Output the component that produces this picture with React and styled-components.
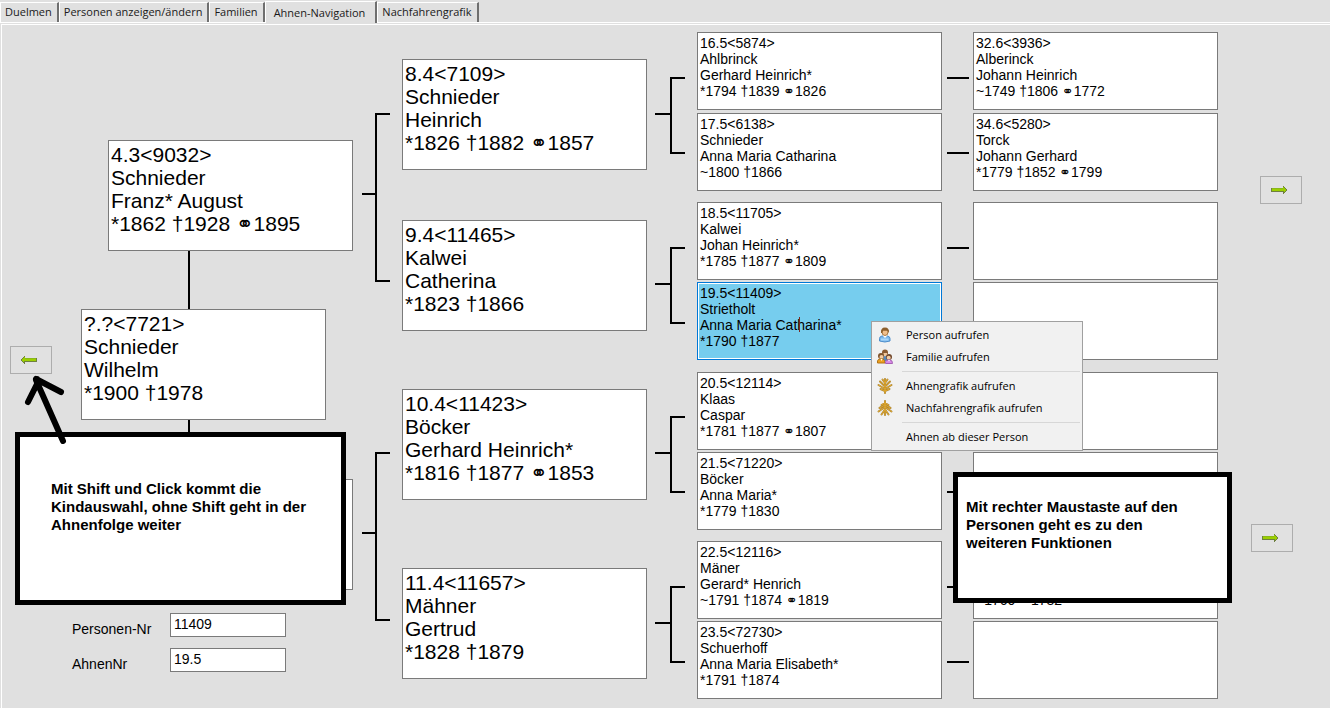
import React from "react";
import styled, { createGlobalStyle, css } from "styled-components";

const GlobalStyle = createGlobalStyle`
  *, *::before, *::after { box-sizing: border-box; }
  body {
    margin: 0;
    background: #e0e0e0;
    color: #000;
    font-family: "Liberation Sans", "DejaVu Sans", sans-serif;
    font-size: 14px;
  }
`;

const Page = styled.div`
  min-height: 100vh;
  display: flex;
  flex-direction: column;
`;

const TabBar = styled.nav`
  display: flex;
  align-items: flex-end;
  height: 23px;
  padding-top: 1px;
  border-bottom: 1px solid #fff;
`;

const Tab = styled.button`
  height: ${(p) => (p.$active ? "22px" : "20px")};
  margin: 0 0 ${(p) => (p.$active ? "-1px" : "0")};
  padding: ${(p) => (p.$active ? "0 10px 0 8px" : "0 5px 2px 4px")};
  border: 0;
  border-top: 1px solid #fff;
  border-left: 1px solid #fff;
  border-right: 2px solid #6f6f6f;
  background: #e0e0e0;
  color: #1a1a1a;
  font: 11px/17px "Open Sans", "Noto Sans", sans-serif;
  white-space: nowrap;
`;

const Panel = styled.main`
  flex: 1;
  display: flex;
  align-items: flex-start;
  margin: 1px 0 0 1px;
  border-top: 1px solid #fff;
  border-left: 1px solid #fff;
`;

const LeftPane = styled.section`
  position: relative;
  flex: 1 0 351px;
  display: flex;
`;

/* A vertical strip of the tree; $rows alternates gaps and items. */
const Column = styled.div`
  display: grid;
  grid-template-rows: ${(p) => p.$rows};
  align-content: start;
  flex: ${(p) => (p.$grow ? "1 0" : "0 0")} ${(p) => p.$width};
  padding-left: ${(p) => p.$inset || "0"};
  position: relative;
`;

const Slot = styled.div`
  grid-row: ${(p) => p.$row};
  display: flex;
  position: relative;
  padding-left: ${(p) => p.$indent || "0"};
  padding-right: ${(p) => p.$outdent || "0"};
`;

const nodeSizes = {
  large: css`
    height: 111px;
    padding: 2px 0 0 2px;
    font-size: 21px;
    line-height: 23px;
  `,
  small: css`
    height: 78px;
    padding: 2px 0 0 2px;
    font-size: 14px;
    line-height: 16px;
  `,
};

const NodeBox = styled.textarea`
  display: block;
  flex: 1 1 245px;
  width: 245px;
  min-width: 0;
  margin: 0;
  border: 1px solid #7a7a7a;
  border-radius: 0;
  background: #fff;
  color: #000;
  font-family: "Liberation Sans", "DejaVu Sans", sans-serif;
  resize: none;
  overflow: hidden;
  outline: 0;
  white-space: pre;
  ${(p) => nodeSizes[p.$size]}
  ${(p) =>
    p.$selected &&
    css`
      border-color: #0078d7;
      background: #76cdee;
      box-shadow: inset 0 0 0 1px #fff;
    `}
`;

const Caret = styled.span`
  position: absolute;
  left: 102px;
  top: 35px;
  width: 1px;
  height: 15px;
  background: #7a2a20;
`;

const VerticalLink = styled.div`
  width: 2px;
  margin-left: 116px;
  background: #000;
`;

const Bracket = styled.div`
  display: flex;
  align-items: flex-start;
`;

const Stem = styled.span`
  flex: none;
  width: ${(p) => p.$width};
  height: 2px;
  margin-top: ${(p) => p.$top};
  background: #000;
`;

const Fork = styled.span`
  flex: none;
  width: 15px;
  height: 100%;
  border: 2px solid #000;
  border-right: 0;
`;

const Dash = styled.span`
  grid-row: ${(p) => p.$row};
  width: 22px;
  background: #000;
`;

const NavButton = styled.button`
  width: 42px;
  height: 28px;
  padding: 0 4px 0 0;
  border: 1px solid #adadad;
  background: #e1e1e1;
  display: flex;
  align-items: center;
  justify-content: center;
`;

const Form = styled.form`
  display: grid;
  grid-template-columns: 98px 116px;
  row-gap: 11px;
`;

const Label = styled.label`
  padding-top: 8px;
  line-height: 16px;
`;

const Field = styled.input`
  width: 116px;
  height: 24px;
  padding: 0 3px 2px;
  border: 1px solid #7a7a7a;
  border-radius: 0;
  background: #fff;
  color: #000;
  font: 14px/16px "Liberation Sans", sans-serif;
`;

const Callout = styled.aside`
  position: absolute;
  z-index: 2;
  border: 5px solid #000;
  background: #fff;
  font-size: 15px;
  font-weight: bold;
  line-height: 18px;
  white-space: pre-line;
`;

const LeftCallout = styled(Callout)`
  left: 13px;
  top: 407px;
  width: 331px;
  height: 173px;
  padding: 43px 0 0 31px;
`;

const RightCallout = styled(Callout)`
  left: -20px;
  top: 447px;
  width: 279px;
  height: 131px;
  padding: 21px 0 0 8px;
`;

const Pointer = styled.svg`
  position: absolute;
  z-index: 3;
  left: 18px;
  top: 345px;
`;

const Menu = styled.ul`
  position: absolute;
  z-index: 4;
  left: 174px;
  top: 39px;
  width: 212px;
  margin: 0;
  padding: 2px;
  border: 1px solid #a0a0a0;
  background: #f1f1f1;
  list-style: none;
`;

const MenuItem = styled.li`
  height: 22px;
`;

const MenuButton = styled.button`
  display: grid;
  grid-template-columns: 29px 1fr;
  align-items: center;
  width: 100%;
  height: 22px;
  padding: 0 0 0 3px;
  border: 0;
  background: transparent;
  color: #000;
  font: 11px/16px "Open Sans", "Noto Sans", sans-serif;
  text-align: left;
  white-space: nowrap;
`;

const IconCell = styled.span`
  display: flex;
  width: 16px;
  height: 16px;
`;

const Separator = styled.li`
  height: 1px;
  margin: 3px 0 3px 28px;
  background: #d7d7d7;
`;

function ArrowIcon({ left }) {
  return (
    <svg width="16" height="10" viewBox="0 0 16 10" shapeRendering="crispEdges" aria-hidden="true">
      <g transform={left ? "translate(16 0) scale(-1 1)" : undefined}>
        <path d="M0 3H12V1H13V2H14V3H15V4H16V6H15V7H14V8H13V9H12V7H0Z" fill="#6f8040" />
        <path d="M1 3H12V2H13V3H14V4H15V6H14V7H13V6H1Z" fill="#9bcf00" />
        <path d="M1 3H12V4H1Z" fill="#8ab81a" />
      </g>
    </svg>
  );
}

function PersonIcon() {
  return (
    <svg width="16" height="16" viewBox="0 0 16 16" aria-hidden="true">
      <path d="M2.500 14V11.500Q2.500 9.500 5 9H10.500Q13 9.500 13 11.500V14Q8 16 2.500 14Z" fill="#7ab8ec" stroke="#4f8ecb" />
      <path d="M6 9L8 11L10 9V7H6Z" fill="#fff" />
      <ellipse cx="8" cy="5" rx="3" ry="3.500" fill="#f0bf8c" stroke="#a8763f" />
      <path d="M4 6Q3.500 .5 8 .5T12 6L10.500 3.800H6L5 6Z" fill="#8d5f2c" />
      <path d="M4 12.500H11.500" stroke="#a9d6fa" strokeWidth="2" />
    </svg>
  );
}

function FamilyIcon() {
  return (
    <svg width="16" height="16" viewBox="0 0 16 16" aria-hidden="true">
      <circle cx="8" cy="3.500" r="3" fill="#8a5a30" />
      <path d="M6.500 4H10V7H6.500Z" fill="#f0c79c" />
      <path d="M4 9Q8 5 12 9V12H4Z" fill="#5b87b5" />
      <circle cx="4" cy="7" r="3" fill="#80552d" />
      <circle cx="4.500" cy="8" r="2" fill="#f4cda3" />
      <path d="M.5 14V12Q1 10 3 10H6Q8 11 8 14Z" fill="#eda11d" stroke="#b27316" />
      <circle cx="12" cy="8" r="3" fill="#70472c" />
      <circle cx="11.700" cy="8.700" r="2" fill="#f4cda3" />
      <path d="M8.500 14.500V13Q9 11 11 11H13Q15.500 11 15.500 14.500Z" fill="#d88be8" stroke="#a763b5" />
      <path d="M3.500 10L4.500 12L5.500 10M11 11L12 12.500L13 11" fill="#fff" />
    </svg>
  );
}

const ancestorTwigs =
  "M8 15V1M8 13L3.500 11M8 13L12.500 11M8 11L1.500 7M8 11L14.500 7M8 8.500L3 3.500M8 8.500L13 3.500M8 5L5.500 1.500M8 5L10.500 1.500";
const descendantTwigs =
  "M8 1V15M8 3L4.500 5M8 3L11.500 5M8 5L2.500 8M8 5L13.500 8M8 7L1.500 11.500M8 7L14.500 11.500M8 9.500L4.500 14.500M8 9.500L11.500 14.500";

function TreeIcon({ down }) {
  const twigs = down ? descendantTwigs : ancestorTwigs;
  return (
    <svg width="16" height="16" viewBox="0 0 16 16" fill="none" strokeLinecap="round" aria-hidden="true">
      <path d={twigs} stroke="#ab8638" strokeWidth="2" />
      <path d={twigs} stroke="#e3a92c" strokeWidth="1" />
    </svg>
  );
}

const tabs = ["Duelmen", "Personen anzeigen/ändern", "Familien", "Ahnen-Navigation", "Nachfahrengrafik"];

const parents = ["4.3<9032>\nSchnieder\nFranz* August\n*1862 †1928 ⚭1895", ""];
const child = "?.?<7721>\nSchnieder\nWilhelm\n*1900 †1978";

const generation4 = [
  "8.4<7109>\nSchnieder\nHeinrich\n*1826 †1882 ⚭1857",
  "9.4<11465>\nKalwei\nCatherina\n*1823 †1866",
  "10.4<11423>\nBöcker\nGerhard Heinrich*\n*1816 †1877 ⚭1853",
  "11.4<11657>\nMähner\nGertrud\n*1828 †1879",
];

const generation5 = [
  "16.5<5874>\nAhlbrinck\nGerhard Heinrich*\n*1794 †1839 ⚭1826",
  "17.5<6138>\nSchnieder\nAnna Maria Catharina\n~1800 †1866",
  "18.5<11705>\nKalwei\nJohan Heinrich*\n*1785 †1877 ⚭1809",
  "19.5<11409>\nStrietholt\nAnna Maria Catharina*\n*1790 †1877",
  "20.5<12114>\nKlaas\nCaspar\n*1781 †1877 ⚭1807",
  "21.5<71220>\nBöcker\nAnna Maria*\n*1779 †1830",
  "22.5<12116>\nMäner\nGerard* Henrich\n~1791 †1874 ⚭1819",
  "23.5<72730>\nSchuerhoff\nAnna Maria Elisabeth*\n*1791 †1874",
];

const generation6 = [
  "32.6<3936>\nAlberinck\nJohann Heinrich\n~1749 †1806 ⚭1772",
  "34.6<5280>\nTorck\nJohann Gerhard\n*1779 †1852 ⚭1799",
  "",
  "",
  "",
  "",
  "\n\n\n~1760 ⚭1782",
  "",
];

const SELECTED = 3;

const rows = {
  back: "321px 28px",
  child: "115px 111px 58px 111px 59px 111px 23px auto",
  forks3: "88px 169px 170px 169px",
  gen4: "34px 111px 50px 111px 58px 111px 68px 111px",
  forks4: "52px 77px 93px 77px 92px 77px 93px 77px",
  pairs: "7px 78px 3px 78px 11px 78px 2px 78px 12px 78px 2px 78px 11px 78px 2px 78px",
  dashes: "52px 2px 73px 2px 93px 2px 73px 2px 92px 2px 73px 2px 93px 2px 73px 2px",
  forward: "151px 28px 320px 28px",
};

/* Items sit on the even grid rows, the gaps on the odd ones. */
const itemRow = (index) => index * 2 + 2;

function Person({ text, name, size, selected }) {
  return (
    <NodeBox
      $size={size}
      $selected={selected}
      defaultValue={text}
      aria-label={name}
      spellCheck={false}
      readOnly
    />
  );
}

function ForkLink({ row, stemTop, stemWidth }) {
  return (
    <Slot $row={row}>
      <Bracket>
        <Stem $width={stemWidth} $top={stemTop} />
        <Fork />
      </Bracket>
    </Slot>
  );
}

function ContextMenu() {
  return (
    <Menu>
      <MenuItem><MenuButton type="button"><IconCell><PersonIcon /></IconCell>Person aufrufen</MenuButton></MenuItem>
      <MenuItem><MenuButton type="button"><IconCell><FamilyIcon /></IconCell>Familie aufrufen</MenuButton></MenuItem>
      <Separator role="separator" />
      <MenuItem><MenuButton type="button"><IconCell><TreeIcon /></IconCell>Ahnengrafik aufrufen</MenuButton></MenuItem>
      <MenuItem><MenuButton type="button"><IconCell><TreeIcon down /></IconCell>Nachfahrengrafik aufrufen</MenuButton></MenuItem>
      <Separator role="separator" />
      <MenuItem><MenuButton type="button"><IconCell />Ahnen ab dieser Person</MenuButton></MenuItem>
    </Menu>
  );
}

export default function App() {
  return (
    <>
      <GlobalStyle />
      <Page>
        <TabBar>
          {tabs.map((tab) => (
            <Tab key={tab} type="button" $active={tab === "Ahnen-Navigation"}>{tab}</Tab>
          ))}
        </TabBar>
        <Panel>
          <LeftPane>
            <Column $width="70px" $inset="8px" $rows={rows.back}>
              <Slot $row={2}>
                <NavButton type="button" aria-label="Zurück"><ArrowIcon left /></NavButton>
              </Slot>
            </Column>
            <Column $grow $width="281px" $rows={rows.child}>
              <Slot $row={2} $indent="36px"><Person size="large" text={parents[0]} name="Vater" /></Slot>
              <Slot $row={3}><VerticalLink /></Slot>
              <Slot $row={4} $indent="9px" $outdent="27px"><Person size="large" text={child} name="Kind" /></Slot>
              <Slot $row={5}><VerticalLink /></Slot>
              <Slot $row={6} $indent="36px"><Person size="large" text={parents[1]} name="Mutter" /></Slot>
              <Slot $row={8}>
                <Form>
                  <Label htmlFor="person-nr">Personen-Nr</Label>
                  <Field id="person-nr" defaultValue="11409" />
                  <Label htmlFor="ahnen-nr">AhnenNr</Label>
                  <Field id="ahnen-nr" defaultValue="19.5" />
                </Form>
              </Slot>
            </Column>
            <LeftCallout>
              {"Mit Shift und Click kommt die\nKindauswahl, ohne Shift geht in der\nAhnenfolge weiter"}
            </LeftCallout>
            <Pointer width="50" height="80" viewBox="0 0 50 80" aria-hidden="true">
              <path
                d="M43 71L16 10M8 32L17 14V9M16 9L41 22"
                fill="none"
                stroke="#000"
                strokeWidth="6"
                strokeLinecap="round"
                strokeLinejoin="round"
              />
            </Pointer>
          </LeftPane>

          <Column $width="49px" $inset="9px" $rows={rows.forks3}>
            <ForkLink row={2} stemTop="80px" stemWidth="13px" />
            <ForkLink row={4} stemTop="80px" stemWidth="13px" />
          </Column>

          <Column $grow $width="245px" $rows={rows.gen4}>
            {generation4.map((text, i) => (
              <Slot key={i} $row={itemRow(i)}><Person size="large" text={text} name={`Ahne ${i + 8}`} /></Slot>
            ))}
          </Column>

          <Column $width="50px" $inset="8px" $rows={rows.forks4}>
            {generation4.map((text, i) => (
              <ForkLink key={i} row={itemRow(i)} stemTop="36px" stemWidth="15px" />
            ))}
          </Column>

          <Column $grow $width="245px" $rows={rows.pairs}>
            {generation5.map((text, i) => (
              <Slot key={i} $row={itemRow(i)}>
                <Person size="small" text={text} name={`Ahne ${i + 16}`} selected={i === SELECTED} />
                {i === SELECTED && <Caret />}
                {i === SELECTED && <ContextMenu />}
              </Slot>
            ))}
          </Column>

          <Column $width="31px" $inset="5px" $rows={rows.dashes}>
            {generation6.map((text, i) => (
              <Dash key={i} $row={itemRow(i)} />
            ))}
          </Column>

          <Column $grow $width="245px" $rows={rows.pairs}>
            {generation6.map((text, i) => (
              <Slot key={i} $row={itemRow(i)}>
                <Person size="small" text={text} name={`Ahne ${i * 2 + 32}`} />
              </Slot>
            ))}
            <RightCallout>
              {"Mit rechter Maustaste auf den\nPersonen geht es zu den\nweiteren Funktionen"}
            </RightCallout>
          </Column>

          <Column $width="112px" $inset="33px" $rows={rows.forward}>
            <Slot $row={2} $indent="9px">
              <NavButton type="button" aria-label="Weiter zur väterlichen Linie"><ArrowIcon /></NavButton>
            </Slot>
            <Slot $row={4}>
              <NavButton type="button" aria-label="Weiter zur mütterlichen Linie"><ArrowIcon /></NavButton>
            </Slot>
          </Column>
        </Panel>
      </Page>
    </>
  );
}
